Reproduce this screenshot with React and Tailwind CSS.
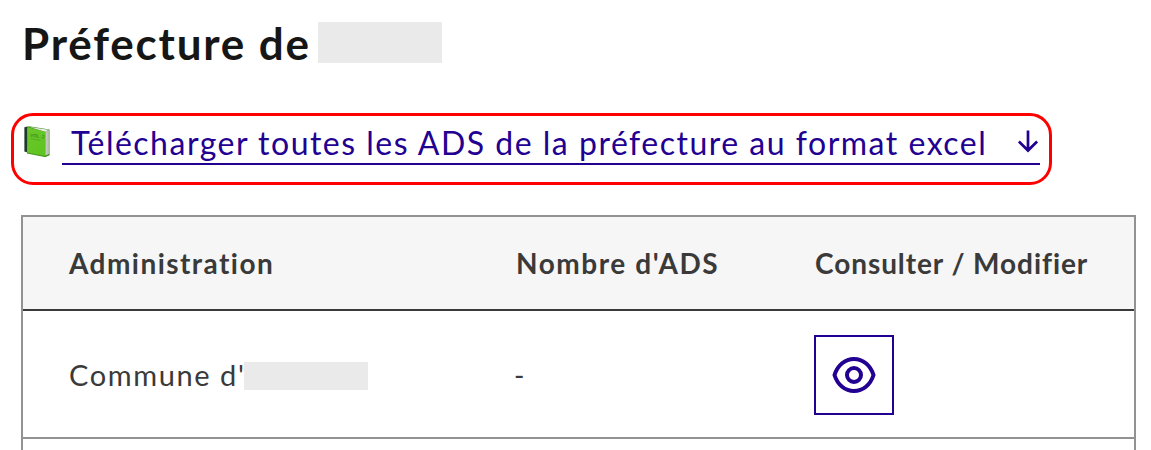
const columns = "grid grid-cols-[446px_299px_1fr] pl-[46px]";

function BookIcon() {
  return (
    <svg className="h-[34px] w-[28px] shrink-0" viewBox="0 0 28 34">
      <defs>
        <linearGradient id="cover" x1="0" y1="0" x2="1" y2="1">
          <stop offset="0" stopColor="#6cc62c" />
          <stop offset="1" stopColor="#5cc51e" />
        </linearGradient>
      </defs>
      <path d="M3.500 2 6 1.300 26.500 4.500v25.300L22 32z" fill="#429420" />
      <path d="M6.500 2 25.500 4.800 22.500 7z" fill="#e9e9e6" />
      <path d="M22.200 7.200 25.800 5v24l-3.600 1.600z" fill="#cfcfcb" />
      <path d="M24 6.200v23.500M25 5.600v23.600" stroke="#aaa8a5" strokeWidth=".4" />
      <path d="M1.400 2.200 4.500 1.500l.8 26.300-3.900-1.200z" fill="#1d3a2b" />
      <path d="m4.400 2.300 18.200 4.400-.2 25L4 28z" fill="url(#cover)" />
      <path d="m4 28 18.300 3.600 4.200-1.800" fill="none" stroke="#41921b" strokeWidth="1" />
      <text x="7" y="11.500" transform="rotate(8 7 11.5)" fontFamily="Liberation Sans" fontSize="4.600" fill="#326e18">VOL. 2</text>
      <path d="m7.500 13.700 10 1.600" stroke="#4a9e22" strokeWidth=".6" />
    </svg>
  );
}

function ArrowDown() {
  return (
    <svg className="mt-px h-8 w-6" viewBox="0 0 24 32" fill="none" stroke="currentColor" strokeWidth="2.700">
      <path d="M12 4.500v19.500M2.900 15.500 12 24.500l9.100-9" />
    </svg>
  );
}

function EyeIcon() {
  return (
    <svg className="h-12 w-12" viewBox="0 0 48 48" fill="none" stroke="currentColor" strokeWidth="4">
      <path d="M4.500 24C7.600 14 15.200 8 24 8s16.400 6 19.500 16C40.400 34 32.800 40 24 40S7.600 34 4.500 24Z" />
      <circle cx="24" cy="24" r="7" />
    </svg>
  );
}

export default function App() {
  return (
    <main className="flex h-[450px] w-[1151px] flex-col overflow-hidden bg-white font-['Lato',sans-serif] text-[#3a3a3a]">
      <h1 className="mt-[15px] flex h-[56px] shrink-0 pl-[22px] text-[44px] leading-[56px] font-bold text-[#161616]">
        <span className="w-[296px] whitespace-nowrap tracking-[1.800px]">Préfecture de</span>
        <span className="mt-[7px] h-[41px] w-[124px] bg-[#eaeaea]" />
      </h1>

      <div className="mt-[42px] ml-[11px] flex h-[72px] w-[1041px] shrink-0 rounded-[22px] border-3 border-[#ff0000] pt-[9px] pl-[9px]">
        <BookIcon />
        <a href="#excel" className="ml-[11px] flex h-[40px] w-[978px] items-start justify-between border-b-2 border-[#220091] pl-[9px] text-[32px] leading-[36px] text-[#220091]">
          <span className="whitespace-nowrap tracking-[1.5px]">Télécharger toutes les ADS de la préfecture au format excel</span>
          <ArrowDown />
        </a>
      </div>

      <section className="mt-[30px] ml-[21px] h-[280px] w-[1115px] shrink-0 border-2 border-[#929292]">
        <div className={`${columns} h-[94px] items-center border-b-2 border-[#3a3a3a] bg-[#f6f6f6] text-[28px] font-bold`}>
          <span className="tracking-[1.45px]">Administration</span>
          <span className="pl-px tracking-[1.55px]">Nombre d'ADS</span>
          <span className="pl-px tracking-[0.93px]">Consulter / Modifier</span>
        </div>
        <div className={`${columns} h-[128px] items-center border-b-2 border-[#929292] pt-[2px] text-[28px]`}>
          <div className="flex items-center">
            <span className="w-[175px] whitespace-nowrap text-[29px] leading-[42px] tracking-[1.600px]">Commune d'</span>
            <span className="mt-[2px] h-[28px] w-[124px] bg-[#eaeaea]" />
          </div>
          <span className="-ml-px">-</span>
          <button className="flex h-[80px] w-[80px] items-center justify-center border-2 border-[#220091] text-[#220091]" aria-label="Consulter">
            <EyeIcon />
          </button>
        </div>
      </section>
    </main>
  );
}
